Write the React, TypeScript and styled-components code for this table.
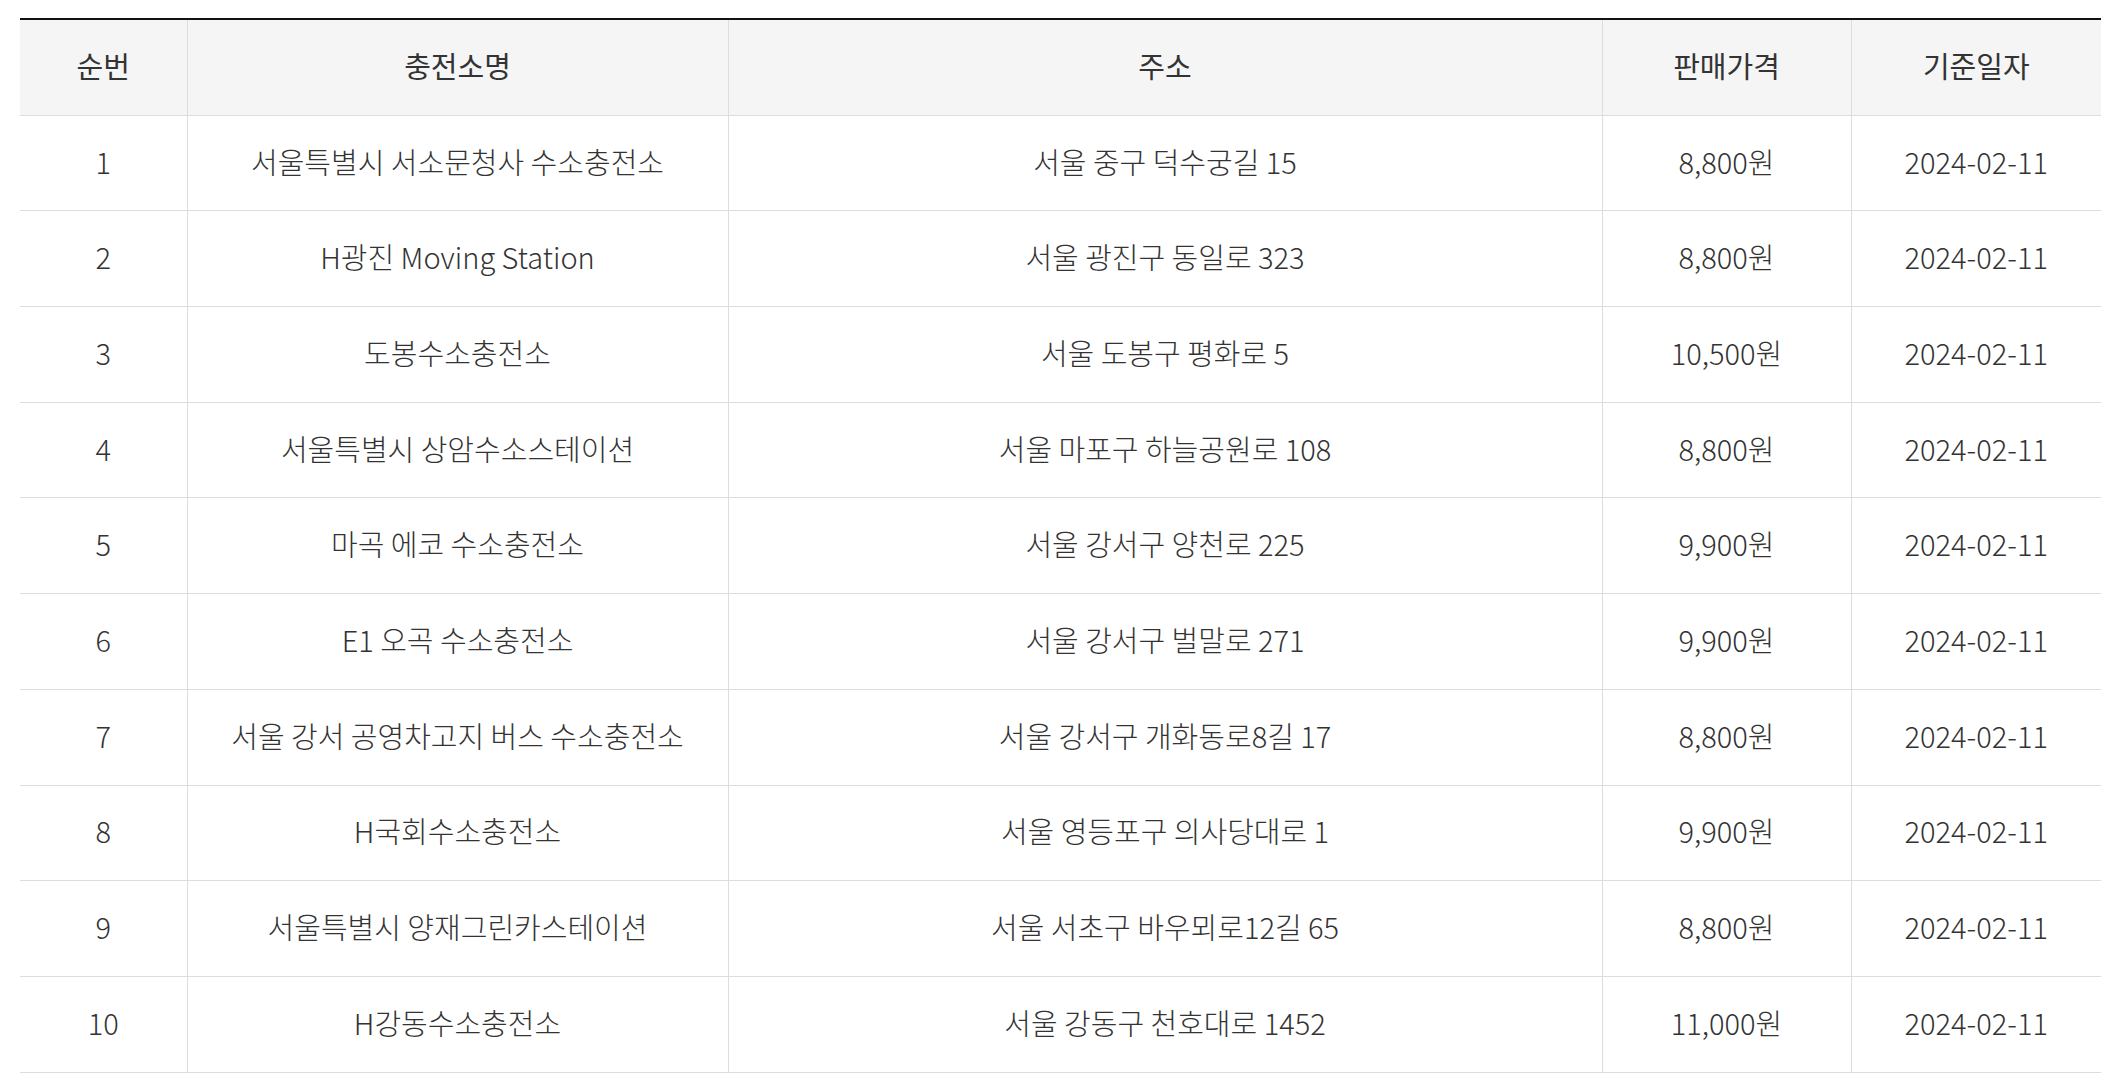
import styled, { createGlobalStyle } from "styled-components";

const GlobalStyle = createGlobalStyle`
    html, body {
        margin: 0;
        padding: 0;
        background: #fff;
    }
    body {
        font-family: "Noto Sans CJK KR", "Noto Sans", sans-serif;
        color: #333;
    }
`;

const Wrapper = styled.div`
    padding: 18px 20px;
`;

const Table = styled.table`
    width: 100%;
    table-layout: fixed;
    border-collapse: collapse;
    border-top: 2px solid #111;
    font-size: 29px;
    text-align: center;
`;

const HeadCell = styled.th`
    height: 89.7px;
    padding: 0 0 5px;
    background-color: #f5f5f5;
    color: #333;
    font-weight: 400;
    border-bottom: 1px solid #ddd;
    border-left: 1px solid #ddd;
    &:first-child {
        border-left: none;
    }
`;

const Cell = styled.td`
    height: 89.7px;
    padding: 0 0 5px;
    color: #333;
    font-weight: 300;
    border-bottom: 1px solid #ddd;
    border-left: 1px solid #ddd;
    &:first-child {
        border-left: none;
    }
`;

const columns = [
    { title: "순번", width: 167 },
    { title: "충전소명", width: 541 },
    { title: "주소", width: 874 },
    { title: "판매가격", width: 249 },
    { title: "기준일자", width: 250 },
];

const rows = [
    ["서울특별시 서소문청사 수소충전소", "서울 중구 덕수궁길 15", "8,800원"],
    ["H광진 Moving Station", "서울 광진구 동일로 323", "8,800원"],
    ["도봉수소충전소", "서울 도봉구 평화로 5", "10,500원"],
    ["서울특별시 상암수소스테이션", "서울 마포구 하늘공원로 108", "8,800원"],
    ["마곡 에코 수소충전소", "서울 강서구 양천로 225", "9,900원"],
    ["E1 오곡 수소충전소", "서울 강서구 벌말로 271", "9,900원"],
    ["서울 강서 공영차고지 버스 수소충전소", "서울 강서구 개화동로8길 17", "8,800원"],
    ["H국회수소충전소", "서울 영등포구 의사당대로 1", "9,900원"],
    ["서울특별시 양재그린카스테이션", "서울 서초구 바우뫼로12길 65", "8,800원"],
    ["H강동수소충전소", "서울 강동구 천호대로 1452", "11,000원"],
];

const App = () => {
    return (
        <Wrapper>
            <GlobalStyle />
            <Table>
                <colgroup>
                    {columns.map((c) => (
                        <col key={c.title} style={{ width: c.width }} />
                    ))}
                </colgroup>
                <thead>
                    <tr>
                        {columns.map((c) => (
                            <HeadCell key={c.title}>{c.title}</HeadCell>
                        ))}
                    </tr>
                </thead>
                <tbody>
                    {rows.map((r, i) => (
                        <tr key={i}>
                            <Cell>{i + 1}</Cell>
                            <Cell>{r[0]}</Cell>
                            <Cell>{r[1]}</Cell>
                            <Cell>{r[2]}</Cell>
                            <Cell>2024-02-11</Cell>
                        </tr>
                    ))}
                </tbody>
            </Table>
        </Wrapper>
    );
};

export default App;
